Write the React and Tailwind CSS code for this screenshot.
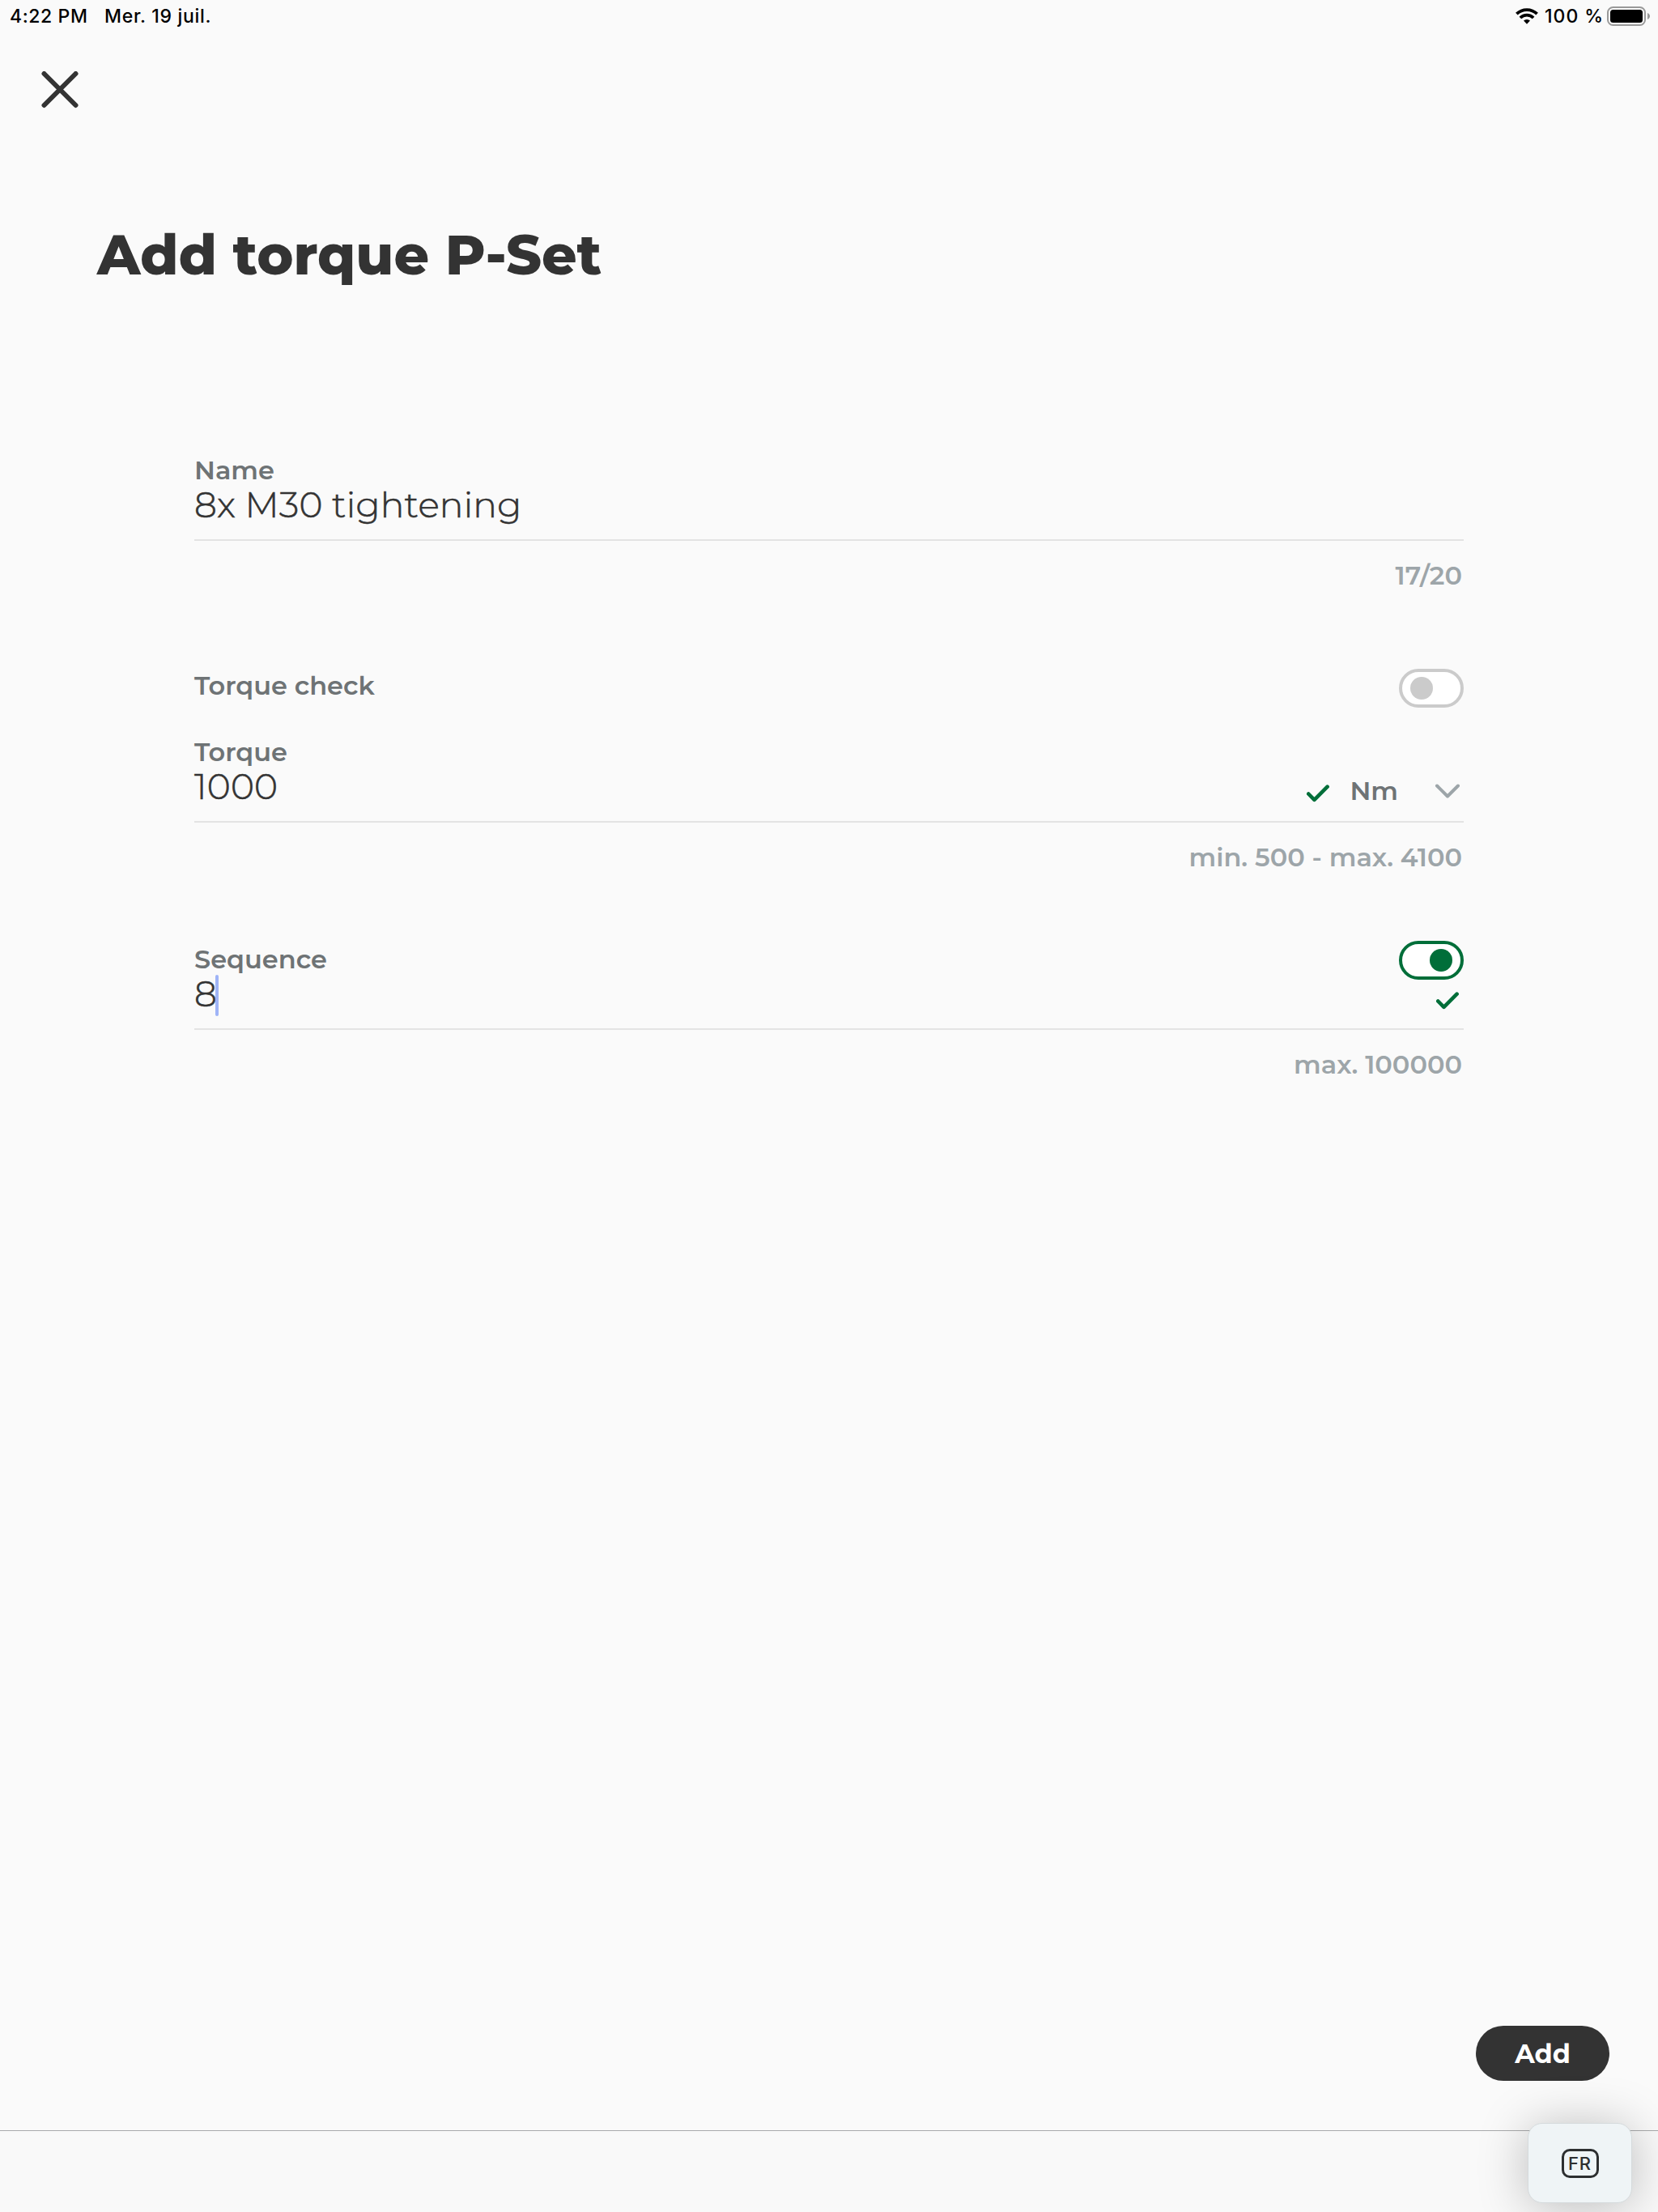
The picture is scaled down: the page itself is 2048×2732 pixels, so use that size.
import { useState } from "react";

function StatusBar() {
  return (
    <div className="flex h-10 items-center justify-between pl-[12px] pr-[10px] text-[23px] leading-10 font-medium text-black">
      <div className="flex">
        <span className="w-[117px] tracking-[0.6px]">4:22 PM</span>
        <span className="tracking-[0.7px]">Mer. 19 juil.</span>
      </div>
      <div className="flex items-center">
        <svg width="28" height="20" viewBox="0 0 28 20" fill="none" stroke="#000" strokeWidth="3.8">
          <path d="M1.4 7.2a18 18 0 0 1 25.2 0" />
          <path d="M5.9 12a11.6 11.6 0 0 1 16.2 0" />
          <path d="M10 15.6a5.8 5.8 0 0 1 8 0L14 19.7z" fill="#000" stroke="none" />
        </svg>
        <span className="ml-[8px] w-[77px] tracking-[1px]">100 %</span>
        <svg width="53" height="24" viewBox="0 0 53 24">
          <rect x="1" y="1" width="46" height="22" rx="6.5" fill="none" stroke="#999" strokeWidth="2" />
          <rect x="4" y="4" width="40" height="16" rx="3.5" fill="#000" />
          <path d="M50 8c4 1.5 4 6.500 0 8z" fill="#999" />
        </svg>
      </div>
    </div>
  );
}

function Toggle({ on, onClick }) {
  return (
    <button
      className={`flex h-12 w-20 items-center rounded-full border-4 bg-white px-[10px] ${
        on ? "justify-end border-[#006e39]" : "justify-start border-[#cbcbcb]"
      }`}
      onClick={onClick}
    >
      <span className={`size-7 rounded-full ${on ? "bg-[#006e39]" : "bg-[#cbcbcb]"}`} />
    </button>
  );
}

function Check() {
  return (
    <svg width="28" height="22" viewBox="0 0 28 22" fill="none" stroke="#006e39" strokeWidth="4.600" strokeLinecap="round" strokeLinejoin="round">
      <path d="M2.300 11.500L9.500 18.900L25.600 2.600" />
    </svg>
  );
}

// Label and value on the left, whatever controls the field needs on the right
function Field({ label, value, hint, children }) {
  return (
    <div>
      <div className="flex h-[107px] justify-between border-b-2 border-[#e3e3e3]">
        <div>
          <div className="text-[32px] leading-[39px] font-semibold text-[#6e7375]">{label}</div>
          <div className="flex text-[44px] leading-[47px] font-light tracking-[0.2px] text-[#333] [-webkit-text-stroke:0.6px_#333]">
            {value}
          </div>
        </div>
        {children}
      </div>
      <div className="mt-[23px] pr-[2px] text-right text-[32px] leading-10 font-semibold text-[#9da5a9]">{hint}</div>
    </div>
  );
}

export default function App() {
  const [torqueCheck, setTorqueCheck] = useState(false);
  const [sequence, setSequence] = useState(true);

  return (
    <div className="flex h-[2732px] w-[2048px] flex-col overflow-hidden bg-[#fafafa] font-['Montserrat','Inter',sans-serif]">
      <div className="font-['Inter',sans-serif]">
        <StatusBar />
      </div>

      <button className="mt-[48px] ml-[51px] w-[46px]">
        <svg width="46" height="46" viewBox="0 0 46 46" stroke="#333" strokeWidth="6" strokeLinecap="round">
          <path d="M3.500 3L42.500 42M42.500 3L3.500 42" />
        </svg>
      </button>

      <h1 className="mt-[141px] ml-[120px] text-[68px] leading-[80px] font-extrabold text-[#333]">
        Add torque P-Set
      </h1>

      <div className="mx-[240px] mt-[206px] flex-1">
        <Field label="Name" value="8x M30 tightening" hint="17/20" />

        <div className="mt-[95px] flex h-12 justify-between">
          <div className="mt-px text-[32px] leading-10 font-semibold text-[#6e7375]">Torque check</div>
          <Toggle on={torqueCheck} onClick={() => setTorqueCheck(!torqueCheck)} />
        </div>

        <div className="mt-[35px]">
          <Field label="Torque" value="1000" hint="min. 500 - max. 4100">
            <div className="flex items-center self-end pr-[4px] pb-[17px]">
              <div className="pt-[5px]"><Check /></div>
              <span className="ml-[25px] text-[32px] leading-10 font-semibold text-[#6e7375]">Nm</span>
              <svg className="ml-[45px]" width="32" height="20" viewBox="0 0 32 20" fill="none" stroke="#9da5a9" strokeWidth="4" strokeLinecap="round" strokeLinejoin="round">
                <path d="M3 3.500L16 16.500L29 3.500" />
              </svg>
            </div>
          </Field>
        </div>

        <div className="mt-[86px]">
          <Field
            label="Sequence"
            value={<>8<span className="-ml-[2px] h-[51px] w-1 rounded-full bg-[#9fb4f7]" /></>}
            hint="max. 100000"
          >
            <div className="-mt-[3px] flex flex-col items-end">
              <Toggle on={sequence} onClick={() => setSequence(!sequence)} />
              <div className="mt-[15px] mr-[6px]"><Check /></div>
            </div>
          </Field>
        </div>
      </div>

      <button className="mr-[60px] h-[68px] w-[165px] self-end rounded-full bg-[#333] pt-px text-[32px] leading-[67px] font-bold text-white">
        Add
      </button>

      <div className="mt-[61px] flex h-[101px] shrink-0 justify-end border-t border-[#a9aaac] bg-[#f9f9f9] pr-[32px]">
        <div className="-mt-[10px] flex h-[99px] w-[129px] items-center justify-center rounded-[18px] border border-[#d5dadc] bg-[#eff4f6] shadow-[0_4px_60px_rgba(0,0,0,0.25)]">
          <div className="flex h-9 w-[46px] items-center justify-center rounded-[10px] border-3 border-[#2d2f30] font-['Inter',sans-serif] text-[22px] leading-none font-medium tracking-[0.8px] text-[#2d2f30]">
            FR
          </div>
        </div>
      </div>
    </div>
  );
}
